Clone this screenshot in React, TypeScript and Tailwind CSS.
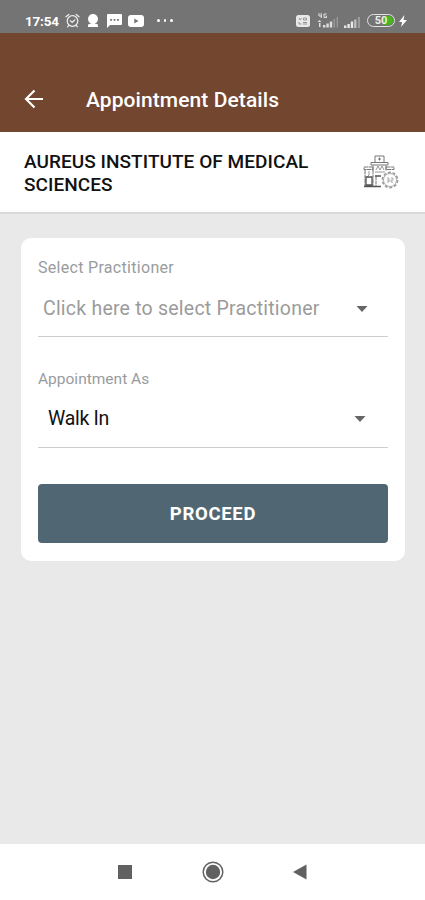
const fields = [
  { label: 'Select Practitioner', value: 'Click here to select Practitioner', placeholder: true },
  { label: 'Appointment As', value: 'Walk In', placeholder: false },
];

function AlarmIcon() {
  return (
    <svg width="15" height="15" viewBox="0 0 15 15" fill="none" stroke="#f0f0f0" strokeWidth="1.2" strokeLinecap="round">
      <circle cx="7.5" cy="8" r="5.3" />
      <path d="M1 3.8 3.8 1.5M14 3.8l-2.8-2.3M5.2 7.6l2 1.8 2.7-2.6M3.8 12.4l-1.2 1.4M11.2 12.4l1.2 1.4" />
    </svg>
  );
}

function PersonIcon() {
  return (
    <svg width="12" height="14" viewBox="0 0 12 14" fill="#fff">
      <circle cx="6" cy="5" r="5" />
      <path d="M4 8h4v1.8h1.2a1.8 1.8 0 0 1 1.8 1.8V13H1v-1.4a1.8 1.8 0 0 1 1.8-1.8H4z" />
    </svg>
  );
}

function MessageIcon() {
  return (
    <svg width="15" height="14" viewBox="0 0 15 14">
      <path d="M1 0h13a1 1 0 0 1 1 1v9a1 1 0 0 1-1 1H3l-3 3V1a1 1 0 0 1 1-1z" fill="#fff" />
      <path d="M3.2 5h1.8v1.8H3.2zM6.6 5h1.8v1.8H6.6zM10 5h1.8v1.8H10z" fill="#747474" />
    </svg>
  );
}

function VideoIcon() {
  return (
    <svg width="16" height="12" viewBox="0 0 16 12">
      <rect width="16" height="12" rx="3" fill="#fff" />
      <path d="M6.3 3.5v5l4.2-2.5z" fill="#747474" />
    </svg>
  );
}

function VolteIcon() {
  return (
    <svg width="14" height="12" viewBox="0 0 14 12">
      <rect width="14" height="12" rx="2.5" fill="#e8e8e8" />
      <path d="M3 3l1.2 2L5.4 3M7.5 3h3v2h-3zM3 7v2h2.5M7 7.5h4M7 9h4" fill="none" stroke="#909090" strokeWidth="0.9" />
    </svg>
  );
}

function DataSignalIcon() {
  return (
    <svg width="22" height="16" viewBox="0 0 22 16">
      <path d="M2 0v3h3M4.2 0v5M9.5 1H7v3.5h2.5V3H8.5" fill="none" stroke="#e0e0e0" strokeWidth="1" />
      <path d="M.5 9h4L2.5 7zM2 10h1.5v4H2zM6 12h2.4v2.5H6zM9.4 10.5h2.4v4H9.4zM12.8 8.5h2.4v6h-2.4z" fill="#dedede" />
      <path d="M16.5 6h1.6v8.5h-1.6zM19.6 4h1.4v10.5h-1.4z" fill="#989898" />
    </svg>
  );
}

function SignalIcon() {
  return (
    <svg width="17" height="11" viewBox="0 0 17 11">
      <path d="M0 8.5h2.4V11H0zM3.4 7h2.4v4H3.4zM6.8 4.5h2.4V11H6.8z" fill="#e8e8e8" />
      <path d="M10.2 2.5h2.2V11h-2.2z" fill="#c4c4c4" />
      <path d="M13.8 0H16v11h-2.2z" fill="#9b9b9b" />
    </svg>
  );
}

function Battery() {
  return (
    <div className="relative ml-1.5 flex h-[13px] w-7 items-center rounded-full border-[1.5px] border-[#e2e2e2] p-px">
      <div className="ml-auto h-full w-2.5 rounded-r-full bg-[#48b51c]" />
      <span className="absolute inset-0 text-center text-[11px] leading-[12px] font-bold text-[#ededed]">50</span>
    </div>
  );
}

function StatusBar() {
  return (
    <div className="flex h-[33px] items-center bg-[#747474] pt-2 pl-[25px] text-white">
      <span className="w-[34px] text-[13.5px] leading-4 font-bold tracking-[-0.2px]">17:54</span>
      <div className="ml-1.5 flex items-center">
        <AlarmIcon />
        <div className="ml-[7px]"><PersonIcon /></div>
        <div className="ml-2"><MessageIcon /></div>
        <div className="ml-1.5"><VideoIcon /></div>
        <div className="ml-[13px] flex gap-1">
          <i className="size-[2.5px] rounded-full bg-white" />
          <i className="size-[2.5px] rounded-full bg-white" />
          <i className="size-[2.5px] rounded-full bg-white" />
        </div>
      </div>
      <div className="mr-[18px] ml-auto flex items-center">
        <div className="mr-[7px] pt-px"><VolteIcon /></div>
        <DataSignalIcon />
        <div className="mt-1 ml-[5px]"><SignalIcon /></div>
        <Battery />
        <svg className="ml-1" width="8" height="12" viewBox="0 0 8 12" fill="#fff">
          <path d="M5.5 0 0 7h3.2L2 12l6-7H4.5z" />
        </svg>
      </div>
    </div>
  );
}

function HospitalIcon() {
  return (
    <svg width="38" height="36" viewBox="0 0 38 36" fill="none" stroke="#777" strokeWidth="1">
      <path d="M13 8V2h9v6M17.5 3.5v3M16 5h3M9 8.5h17v2.5H9zM11 11.5v5M24 11.5v5" />
      <path d="M14 16l2-4 2 4 2-4 2 4M13 18h10" stroke="#999" />
      <path d="M2 13h9v2.5H2zM24 13h8v2.5h-8zM3 16v16M11 16v16M14 22v10" strokeDasharray="4 .5" />
      <path d="M7 17v4l-2 2" stroke="#999" />
      <path d="M2 32.5h17M4 23h6v8H4zM13 22h6" stroke="#555" strokeWidth="1.3" />
      <circle cx="28" cy="26" r="7.6" stroke="#999" strokeWidth="1.6" strokeDasharray="3 1.775" />
      <circle cx="28" cy="26" r="6.5" stroke="#aaa" />
      <path d="M25 24h2v2h-2M27 26v2h-2M29 24h2v2h-2v2h2" stroke="#aaa" />
    </svg>
  );
}

function SelectField({ label, value, placeholder }: { label: string; value: string; placeholder: boolean }) {
  return (
    <div className="h-[111px]">
      <p className={placeholder
        ? 'text-[16px] leading-5 tracking-[0.3px] text-[#999c9e]'
        : 'text-[15.5px] leading-5 text-[#999c9e]'}>{label}</p>
      <div className={placeholder
        ? 'flex h-[59px] items-center justify-between border-b-[1.5px] border-[#cecece] pt-[3px] pr-5 pl-[5px]'
        : 'flex h-[59px] items-center justify-between border-b-[1.5px] border-[#cecece] pt-0.5 pr-[22px] pl-2.5'}>
        <span className={placeholder
          ? 'text-[19.5px] tracking-[0.22px] text-[#9b9b9b]'
          : 'text-[19.5px] tracking-[-0.3px] text-[#111]'}>{value}</span>
        <svg width="12" height="6" viewBox="0 0 12 6" fill="#666">
          <path d="M.5 0h11L6 6z" />
        </svg>
      </div>
    </div>
  );
}

export default function App() {
  return (
    <div className="flex h-[900px] w-[425px] flex-col overflow-hidden bg-[#e9e9e9] font-['Roboto',sans-serif]">
      <StatusBar />
      <header className="flex h-[99px] items-center bg-[#72462f] pt-[34px] pl-6 text-white">
        <svg className="mb-0.5" width="20" height="20" viewBox="0 0 20 20" fill="none" stroke="#fff" strokeWidth="2.2">
          <path d="M19 10H2M10.5 1.5 2 10l8.5 8.5" />
        </svg>
        <h1 className="ml-[42px] text-[21px] leading-6 font-medium tracking-[0.08px] whitespace-nowrap">Appointment Details</h1>
      </header>
      <div className="flex h-[82px] items-center justify-between border-b-2 border-[#dadada] bg-white pr-[25px] pl-6">
        <h2 className="w-[300px] pt-[3px] text-[19px] leading-[22.5px] font-medium tracking-[0.05px] text-[#111]">
          AUREUS INSTITUTE OF MEDICAL SCIENCES
        </h2>
        <HospitalIcon />
      </div>
      <main className="flex-1 pt-6 pr-5 pl-[21px]">
        <div className="h-[323px] rounded-[10px] bg-white px-[17px] pt-5">
          {fields.map((field) => (
            <SelectField key={field.label} {...field} />
          ))}
          <button className="mt-1 h-[59px] w-full rounded bg-[#506773] pt-[3px] text-[18.5px] font-bold tracking-[0.7px] text-white">
            PROCEED
          </button>
        </div>
      </main>
      <nav className="flex h-14 items-center bg-white pl-[118px]">
        <div className="size-3.5 bg-[#616161]" />
        <svg className="ml-[70px]" width="22" height="22" viewBox="0 0 22 22">
          <circle cx="11" cy="11" r="9.8" fill="none" stroke="#616161" strokeWidth="1.5" />
          <circle cx="11" cy="11" r="7.2" fill="#616161" />
        </svg>
        <svg className="ml-[69px]" width="14" height="16" viewBox="0 0 14 16" fill="#616161">
          <path d="M13.5.5v15L0 8z" />
        </svg>
      </nav>
    </div>
  );
}
